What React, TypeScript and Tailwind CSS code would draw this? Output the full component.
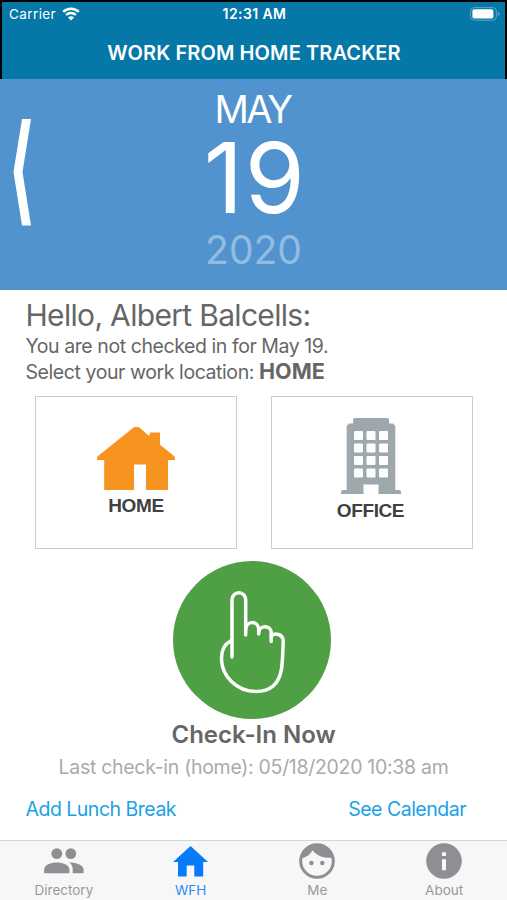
import React, { useState } from "react";

type Location = "HOME" | "OFFICE";

function WifiIcon() {
  return (
    <svg width="18" height="14" viewBox="0 0 18 14" fill="none">
      <path d="M1.2 4.9a11.2 11.2 0 0 1 15.6 0" stroke="white" strokeWidth="2.6" />
      <path d="M4.1 8a7 7 0 0 1 9.8 0" stroke="white" strokeWidth="2.4" />
      <path d="M9 13.6 6 10.6a4.4 4.4 0 0 1 6 0z" fill="white" />
    </svg>
  );
}

function BatteryIcon() {
  return (
    <svg width="30" height="14" viewBox="0 0 30 14" fill="none">
      <rect x="0.6" y="0.6" width="25.8" height="12.6" rx="3.6" stroke="#5fa6c6" />
      <rect x="2.4" y="2.3" width="21" height="9.2" rx="1.8" fill="white" />
      <path d="M27.8 4.8v4.4c1-.4 1.6-1.2 1.6-2.2s-.6-1.8-1.6-2.2z" fill="#5fa6c6" />
    </svg>
  );
}

function HouseIcon() {
  return (
    <svg width="78" height="63" viewBox="0 0 78 63" fill="#f7941f">
      <path d="M38 0h3q1 0 2 1l8.5 7.5 1.5-1V5.5h10v12.300L77 29q1 1 1 2v2h-7v30H49V37.5H37V63H7.200V33H0v-2q0-1 1-2L36 1q1-1 2-1z" />
    </svg>
  );
}

function OfficeIcon() {
  const rows = [13, 25.5, 38, 50.5];
  const cols = [13, 25.5, 38];
  return (
    <svg width="60" height="76" viewBox="0 0 60 76">
      <path
        d="M14 0h32q2 0 2 2v3.5h4l2.3 2.5v64H58q2 0 2 2v2H37.5v-9.500h-15V76H0v-2q0-2 2-2h3.700V8L8 5.500h4V2q0-2 2-2z"
        fill="#9ea8ac"
      />
      {rows.map((y) =>
        cols.map((x) => (
          <rect key={`${x}-${y}`} x={x} y={y} width="9" height="9" rx="1" fill="#fbfeff" />
        )),
      )}
    </svg>
  );
}

function TouchIcon() {
  return (
    <svg
      width="158"
      height="158"
      viewBox="0 0 158 158"
      fill="none"
      stroke="white"
      strokeWidth="3.5"
      strokeLinecap="round"
    >
      <path d="M59 96V38.5a6.700 6.700 0 0 1 13.700 0V74" />
      <path d="M72.700 68c1-8 12-9 13 0v5" />
      <path d="M85.700 71c1-7 12-7 12.500 0v9.500" />
      <path d="M98.200 75.500c3-4 12-3 12 4.500-.3 10-.5 20-1.700 28-2.500 15-11.500 22.500-25.500 22.500-20 0-34-16-34.500-32-.2-8 2.500-15 9-18.500" />
    </svg>
  );
}

function PeopleIcon() {
  return (
    <svg width="40" height="26" viewBox="0 0 40 26" fill="#8e8e93">
      <circle cx="12.800" cy="5.600" r="5.400" />
      <circle cx="26.800" cy="5.600" r="5.400" />
      <path d="M.2 25.300V21.500C.2 17 7 14.500 12.800 14.500s12.600 2.500 12.600 7v3.800z" />
      <path d="M25.800 14.500c6 0 13.700 2.500 13.700 7v3.800H28.700v-3.800c0-3-1.200-5.200-3.500-6.900z" />
    </svg>
  );
}

function WfhIcon() {
  return (
    <svg width="35" height="31" viewBox="0 0 35 31" fill="#067bfb">
      <path d="M17.500 0 35 16h-4.800v14.500H21.300v-11h-7.600v11H5V16H0z" />
    </svg>
  );
}

function FaceIcon() {
  return (
    <svg width="36" height="36" viewBox="0 0 36 36" fill="#8e8e93">
      <circle cx="18" cy="18" r="16.300" fill="none" stroke="#8e8e93" strokeWidth="3" />
      <path d="M1.800 15.500C7 14.500 11.500 11.500 13.500 7.200c4.500 5.500 11.500 8.500 20 7.300C31.500 6 25.500 1.500 18 1.500S3 7 1.800 15.500z" />
      <circle cx="12.400" cy="20" r="2.200" />
      <circle cx="23.300" cy="20" r="2.200" />
    </svg>
  );
}

function InfoIcon() {
  return (
    <svg width="36" height="36" viewBox="0 0 36 36">
      <circle cx="18" cy="18" r="17.800" fill="#8e8e93" />
      <path d="M16 9.200h4v3.800h-4zM16 16.200h4v11h-4z" fill="#f7f7f7" />
    </svg>
  );
}

const tabs = [
  { name: "Directory", icon: <PeopleIcon />, active: false },
  { name: "WFH", icon: <WfhIcon />, active: true },
  { name: "Me", icon: <FaceIcon />, active: false },
  { name: "About", icon: <InfoIcon />, active: false },
];

export default function App() {
  const [location, setLocation] = useState<Location>("HOME");

  return (
    <div className="flex h-[900px] w-[507px] flex-col overflow-hidden bg-white font-['Inter',sans-serif] text-[#666666]">
      <header className="h-[79px] border-x-2 border-t-2 border-black bg-[#0578a8] text-white">
        <div className="grid h-6 grid-cols-3 items-center pr-[5px] pl-[7px]">
          <div className="flex items-center gap-[6px] text-[13.5px] tracking-[0.4px]">
            <span>Carrier</span>
            <WifiIcon />
          </div>
          <span className="-mt-px text-center text-[14px] font-semibold tracking-[0.4px]">
            12:31 AM
          </span>
          <div className="flex justify-end">
            <BatteryIcon />
          </div>
        </div>
        <h1 className="mt-3 pl-[1px] text-center text-[20px] leading-[30px] font-semibold tracking-[0.1px]">
          WORK FROM HOME TRACKER
        </h1>
      </header>

      <section className="grid h-[211px] grid-cols-[1fr_auto_1fr] bg-[#5193cf] text-white">
        <button className="mt-[40px] ml-[13px] h-[107px] w-[18px]">
          <svg width="18" height="107" viewBox="0 0 18 107" fill="white">
            <path d="M9 0h9L9.500 53l8.500 53.500H9L.500 53z" />
          </svg>
        </button>
        <div className="flex flex-col items-center">
          <span className="mt-2 h-[44px] pr-[2px] text-[38px] leading-[44px] tracking-[-2.5px]">
            MAY
          </span>
          <span className="h-[96px] pl-[3px] text-[97px] leading-[94px] tracking-[1.5px]">19</span>
          <span className="h-[46px] text-[39px] leading-[46px] text-[#93bce2]">2020</span>
        </div>
      </section>

      <main className="flex flex-1 flex-col">
        <div className="mt-[8px] pl-[25.5px]">
          <h2 className="text-[30px] leading-[34px] tracking-[-0.68px]">Hello, Albert Balcells:</h2>
          <p className="mt-[2px] text-[19.5px] leading-[25px] tracking-[-0.43px]">
            You are not checked in for May 19.
          </p>
          <p className="text-[19.5px] leading-[25px] tracking-[-0.42px]">
            Select your work location:{" "}
            <b className="text-[21.5px] tracking-normal">{location}</b>
          </p>
        </div>

        <div className="mt-[11px] ml-[35px] flex gap-[34px] font-['Liberation_Sans',sans-serif] text-[19px] leading-[22px] font-bold text-[#404040]">
          <button
            className="flex h-[153px] w-[202px] flex-col items-center border border-[#cccccc] pt-[30px]"
            onClick={() => setLocation("HOME")}
          >
            <HouseIcon />
            <span className="mt-[5px] tracking-[-0.4px]">HOME</span>
          </button>
          <button
            className="flex h-[153px] w-[202px] flex-col items-center border border-[#cccccc] pt-[21px] pr-[3px]"
            onClick={() => setLocation("OFFICE")}
          >
            <OfficeIcon />
            <span className="mt-[6px] tracking-[-0.4px]">OFFICE</span>
          </button>
        </div>

        <div className="mt-[12px] flex flex-col items-center">
          <button className="mr-[4px] rounded-full bg-[#4f9f44]">
            <TouchIcon />
          </button>
          <h3 className="h-[32px] text-[24px] leading-[32px] font-semibold">Check-In Now</h3>
          <p className="mt-[3px] h-[26px] text-[19.5px] leading-[26px] tracking-[-0.3px] text-[#aaaaaa]">
            Last check-in (home): 05/18/2020 10:38 am
          </p>
        </div>

        <div className="mt-[17px] flex justify-between pr-[41px] pl-[25.5px] text-[19.5px] leading-[24px] tracking-[-0.5px] text-[#1ba1e6]">
          <button>Add Lunch Break</button>
          <button>See Calendar</button>
        </div>
      </main>

      <nav className="grid h-[60px] grid-cols-4 border-t border-[#d5d5d5] bg-[#f7f7f7]">
        {tabs.map((tab) => (
          <button
            key={tab.name}
            className={`flex flex-col items-center pl-[1px] text-[13.5px] leading-[18px] ${
              tab.active ? "text-[#2b8df5]" : "text-[#999999]"
            }`}
          >
            <span className="flex h-[40px] items-center">{tab.icon}</span>
            {tab.name}
          </button>
        ))}
      </nav>
    </div>
  );
}
